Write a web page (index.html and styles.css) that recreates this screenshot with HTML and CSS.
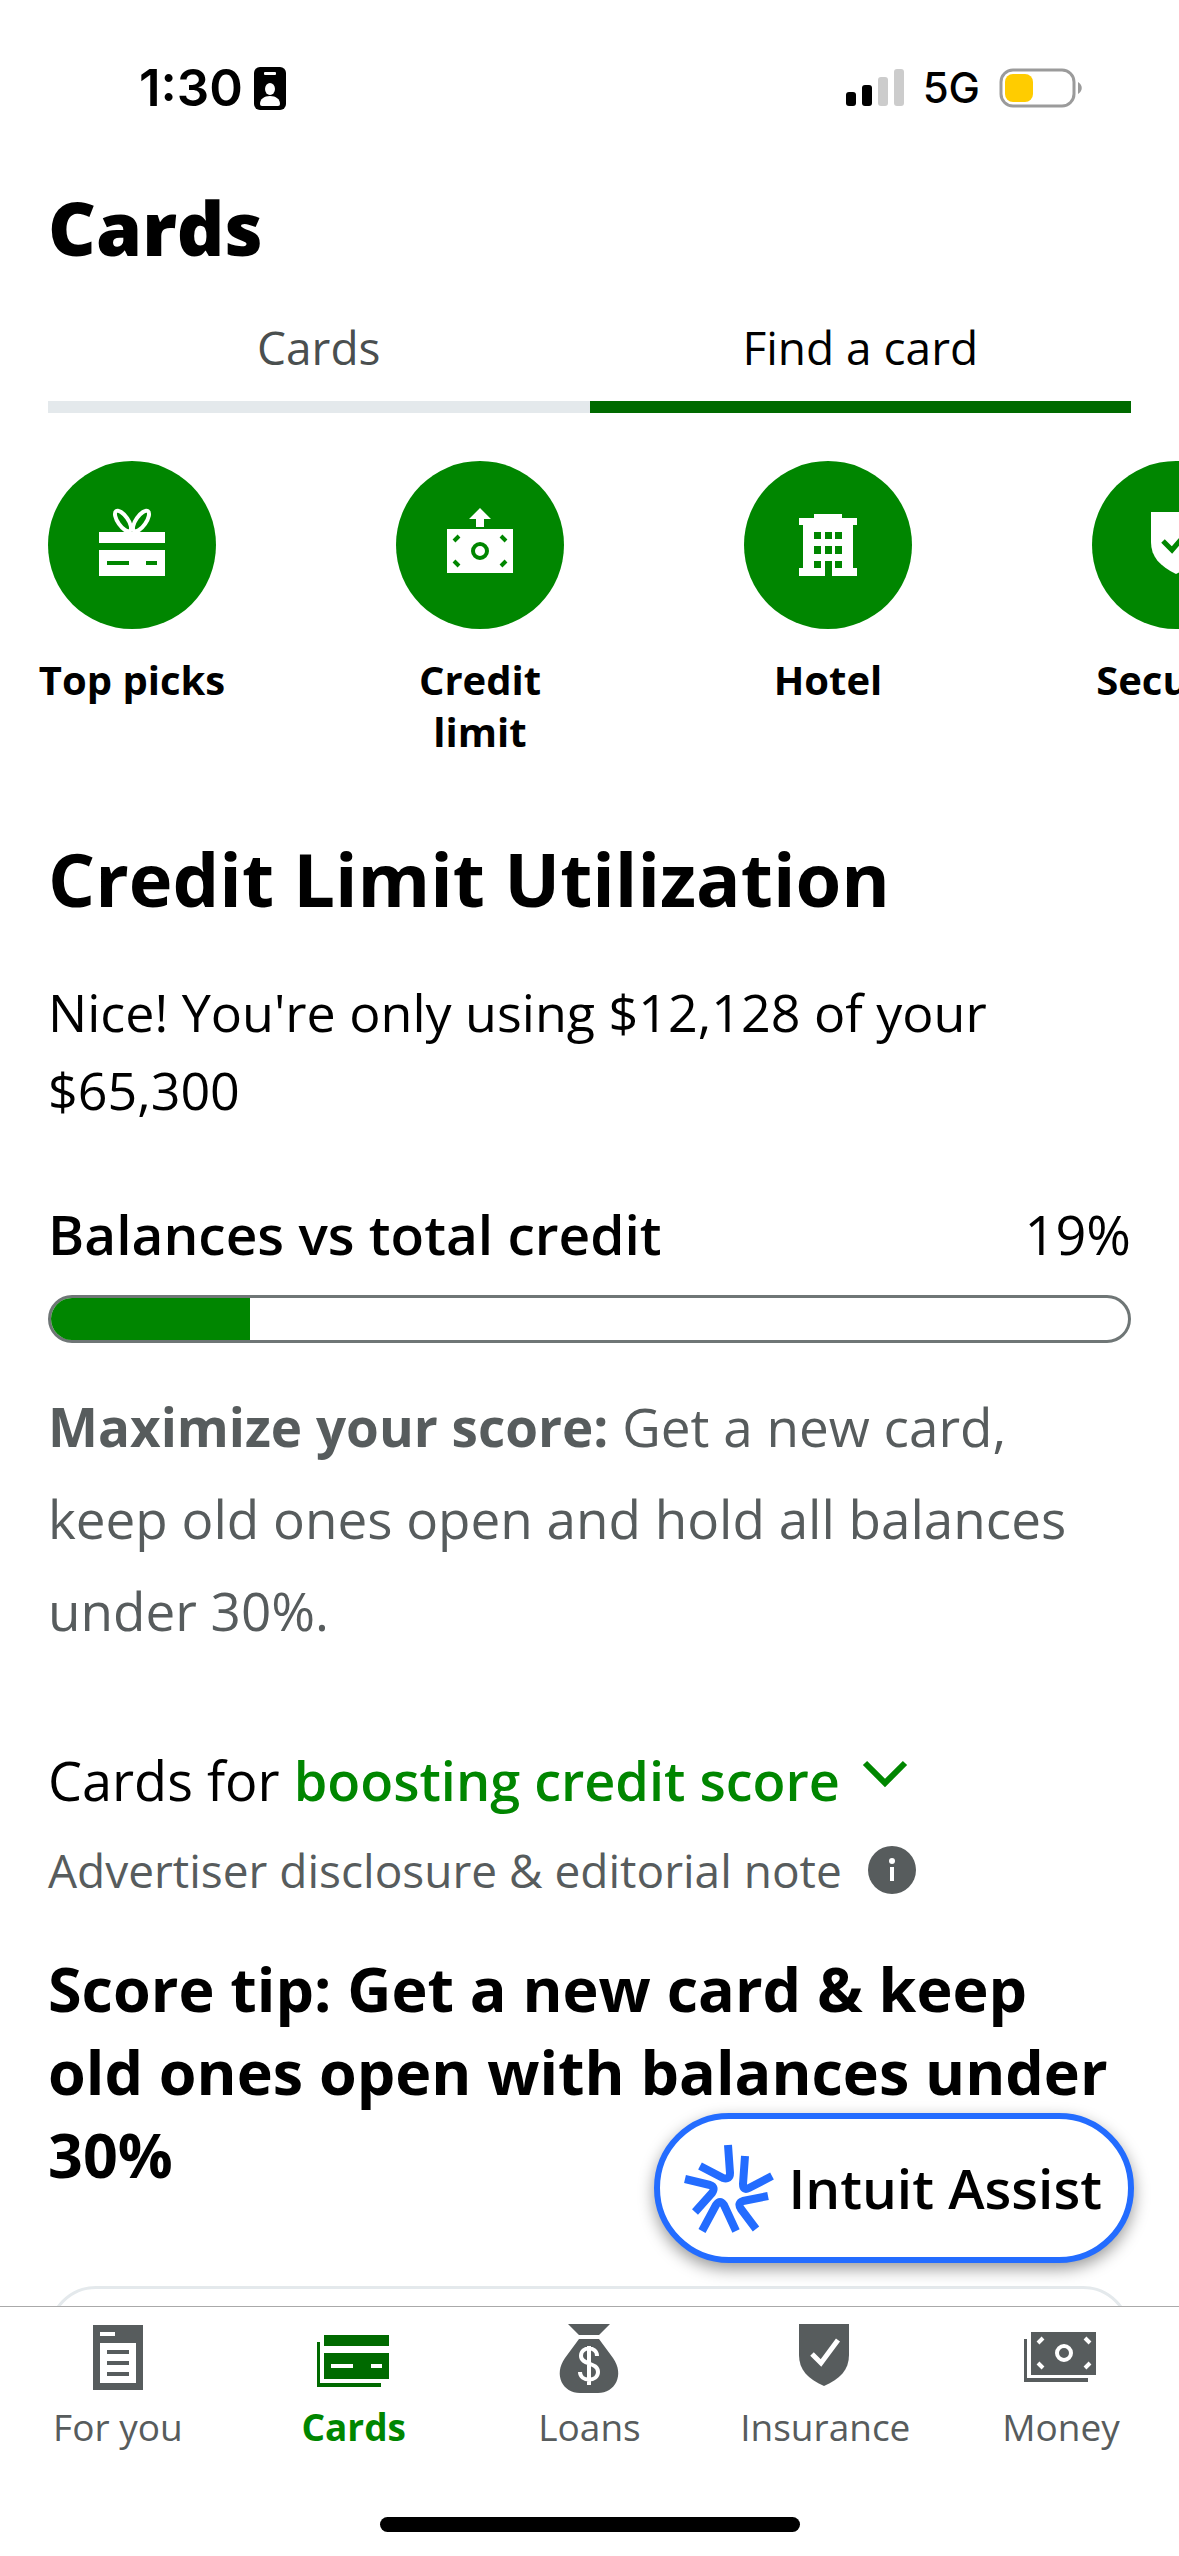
FILE: index.html
```html
<!DOCTYPE html>
<html lang="en">
<head>
<meta charset="utf-8">
<meta name="viewport" content="width=device-width, initial-scale=1">
<title>Cards</title>
<link rel="stylesheet" href="styles.css">
</head>
<body>
<div class="app">
  <header class="status">
    <div class="status-left">
      <span class="time">1:30</span>
      <svg class="badge" width="32" height="43" viewBox="0 0 32 43" aria-hidden="true">
        <rect width="32" height="43" rx="6" fill="#000"/>
        <rect x="10" y="5" width="12" height="3" rx="1" fill="#fff"/>
        <ellipse cx="16" cy="22" rx="5" ry="6" fill="#fff"/>
        <path d="M6 37c0-5 4-8 10-8s10 3 10 8q0 2-2 2H8q-2 0-2-2z" fill="#fff"/>
      </svg>
    </div>
    <div class="status-right">
      <svg width="58" height="38" viewBox="0 0 58 38" aria-hidden="true">
        <rect x="0" y="23" width="10" height="14" rx="3"/>
        <rect x="16" y="16" width="10" height="21" rx="3"/>
        <rect x="32" y="8" width="10" height="29" rx="3" fill="#ccc"/>
        <rect x="48" y="0" width="10" height="37" rx="3" fill="#ccc"/>
      </svg>
      <span class="network">5G</span>
      <svg width="84" height="40" viewBox="0 0 84 40" aria-hidden="true">
        <rect x="2" y="2" width="73" height="36" rx="12" fill="none" stroke="#9b9b9b" stroke-width="3"/>
        <rect x="6" y="6" width="28" height="28" rx="8" fill="#fc0"/>
        <path d="M79 14c5 3 5 9 0 12z" fill="#9b9b9b"/>
      </svg>
    </div>
  </header>

  <main class="content">
    <h1 class="title">Cards</h1>
    <div class="tabs" role="tablist">
      <button class="tab" role="tab" aria-selected="false">Cards</button>
      <button class="tab tab-active" role="tab" aria-selected="true">Find a card</button>
    </div>

    <nav class="categories" aria-label="Card categories">
      <a class="category" href="#top-picks">
        <span class="disc">
          <svg width="66" height="74" viewBox="0 0 66 74" aria-hidden="true">
            <g fill="none" stroke="#fff" stroke-width="4">
              <ellipse cx="24" cy="13" rx="5" ry="12" transform="rotate(-35 24 13)"/>
              <ellipse cx="42" cy="13" rx="5" ry="12" transform="rotate(35 42 13)"/>
            </g>
            <path fill="#fff" fill-rule="evenodd" d="M0 24h66v11H0zM0 42h66v26H0zM8 53v4h22v-4zM47 53v4h11v-4z"/>
          </svg>
        </span>
        <span class="category-name">Top picks</span>
      </a>
      <a class="category" href="#credit-limit">
        <span class="disc">
          <svg width="66" height="74" viewBox="0 0 66 74" aria-hidden="true">
            <path fill="#fff" d="M33 0l11 11h-7v8h-8v-8h-7zM0 21h66v44H0z"/>
            <g fill="none" stroke="#008600" stroke-width="4">
              <circle cx="33" cy="43" r="7"/>
              <path d="M7 33l5-5M54 28l5 5M7 53l5 5M59 53l-5 5"/>
            </g>
          </svg>
        </span>
        <span class="category-name">Credit limit</span>
      </a>
      <a class="category" href="#hotel">
        <span class="disc">
          <svg width="58" height="62" viewBox="0 0 58 62" aria-hidden="true">
            <path fill="#fff" fill-rule="evenodd" d="M0 4h15V0h28v4h15v7h-4v43h4v8H33V47h-7v15H0v-8h4V11H0zM15 18v7h7v-7zM26 18v7h7v-7zM36 18v7h7v-7zM15 32v8h7v-8zM26 32v8h7v-8zM36 32v8h7v-8zM15 47v7h7v-7zM36 47v7h7v-7z"/>
          </svg>
        </span>
        <span class="category-name">Hotel</span>
      </a>
      <a class="category" href="#secured">
        <span class="disc">
          <svg width="50" height="66" viewBox="0 0 50 66" aria-hidden="true">
            <path fill="#fff" d="M0 0h50v30c0 15-9 24-25 32C9 54 0 45 0 30z"/>
            <path fill="none" stroke="#008600" stroke-width="5" d="M12 29l9 9 18-21"/>
          </svg>
        </span>
        <span class="category-name">Secured</span>
      </a>
    </nav>

    <section class="utilization">
      <h2 class="heading">Credit Limit Utilization</h2>
      <p class="summary">Nice! You're only using $12,128 of your $65,300</p>
      <div class="balance">
        <span class="balance-name" id="balance-name">Balances vs total credit</span>
        <span>19%</span>
      </div>
      <div class="meter" role="meter" aria-labelledby="balance-name" aria-valuemin="0" aria-valuemax="100" aria-valuenow="19"><div class="meter-fill" style="width: 18.5%"></div></div>
      <p class="advice"><strong>Maximize your score:</strong> Get a new card, keep old ones open and hold all balances under 30%.</p>
    </section>

    <section class="offers">
      <p class="filter">Cards for
        <button class="filter-button">boosting credit score
          <svg class="chevron" width="46" height="28" viewBox="0 0 46 28" aria-hidden="true"><path d="M3 3l20 20L43 3" fill="none" stroke="#008600" stroke-width="6"/></svg>
        </button>
      </p>
      <a class="disclosure" href="#disclosure">Advertiser disclosure &amp; editorial note
        <svg width="48" height="48" viewBox="0 0 48 48" aria-hidden="true">
          <circle cx="24" cy="24" r="24" fill="#575c5d"/>
          <circle cx="24" cy="15" r="3" fill="#fff"/>
          <path d="M22 21h4v14h-4z" fill="#fff"/>
        </svg>
      </a>
      <h3 class="tip">Score tip: Get a new card &amp; keep old ones open with balances under 30%</h3>
      <div class="offer"></div>
    </section>
  </main>

  <footer class="bottom">
    <button class="assist">
      <svg width="90" height="90" viewBox="0 0 90 90" aria-hidden="true">
        <g fill="none" stroke="#236cff" stroke-width="8" stroke-linejoin="round">
          <path d="M44 2l2 28q0 7-7 5L16 23"/>
          <path d="M61 13l-2 28q0 7 6 4l23-12"/>
          <path d="M1 36l25 6q6 2 2 8L11 69"/>
          <path d="M18 88l14-26q4-6 8 0l12 26"/>
          <path d="M84 53l-25 5q-6 2-2 8l15 20"/>
        </g>
      </svg>
      Intuit Assist
    </button>
    <nav class="nav" aria-label="Main">
      <a class="nav-item" href="#for-you">
        <svg width="76" height="76" viewBox="0 0 76 76" aria-hidden="true">
          <path fill="#575c5d" fill-rule="evenodd" d="M13 5h50v65H13zM20 12v4h15v-4zM20 23v40h36V23zM27 30h22v4H27zM27 41h22v4H27zM27 52h22v4H27z"/>
        </svg>
        For you
      </a>
      <a class="nav-item nav-active" href="#cards" aria-current="page">
        <svg width="76" height="76" viewBox="0 0 76 76" aria-hidden="true">
          <path fill="#006a00" fill-rule="evenodd" d="M8 15h65v11H8zM8 33h65v26H8zM15 44v4h22v-4zM55 44v4h11v-4zM1 22h3v41h61v4H1z"/>
        </svg>
        Cards
      </a>
      <a class="nav-item" href="#loans">
        <svg width="76" height="76" viewBox="0 0 76 76" aria-hidden="true">
          <path fill="#575c5d" d="M17 4h42L48 15H28zM28 19h20l14 19c12 17 2 35-15 35H29C12 73 2 55 14 38z"/>
          <path fill="none" stroke="#fff" stroke-width="4" d="M46 36c0-10-16-10-16 0 0 9 17 6 17 16s-18 10-18 0M38 26v39"/>
        </svg>
        Loans
      </a>
      <a class="nav-item" href="#insurance">
        <svg width="76" height="76" viewBox="0 0 76 76" aria-hidden="true">
          <path fill="#575c5d" d="M12 4h50v31c0 15-9 24-25 31-16-7-25-16-25-31z"/>
          <path fill="none" stroke="#fff" stroke-width="5" d="M25 34l9 9 17-23"/>
        </svg>
        Insurance
      </a>
      <a class="nav-item" href="#money">
        <svg width="76" height="76" viewBox="0 0 76 76" aria-hidden="true">
          <path fill="#575c5d" d="M8 12h65v43H8zM1 19h3v39h61v4H1z"/>
          <g fill="none" stroke="#fff" stroke-width="4">
            <circle cx="41" cy="33" r="7"/>
            <path d="M15 23l5-5M62 18l5 5M15 43l5 5M67 43l-5 5"/>
          </g>
        </svg>
        Money
      </a>
    </nav>
    <div class="home"></div>
  </footer>
</div>
</body>
</html>
```
FILE: styles.css
```css
* {
  box-sizing: border-box;
  margin: 0;
}

body {
  background: #fff;
  color: #000;
  font-family: "Open Sans", "Noto Sans", sans-serif;
  font-size: 54px;
  line-height: 78px;
}

button {
  padding: 0;
  border: 0;
  background: none;
  color: inherit;
  font: inherit;
}

a {
  color: inherit;
  text-decoration: none;
}

svg {
  flex: none;
}

.app {
  display: flex;
  flex-direction: column;
  height: 100vh;
}

.status {
  display: flex;
  flex: none;
  justify-content: space-between;
  padding: 56px 96px 0 139px;
  font-family: Inter, sans-serif;
  line-height: 64px;
}

.status-left,
.status-right {
  display: flex;
  align-items: center;
}

.status-left {
  gap: 11px;
}

.status-right {
  gap: 19px;
}

.time {
  font-size: 51px;
  font-weight: 600;
}

.network {
  font-size: 42px;
  font-weight: 500;
}

.content {
  flex: 1;
  min-height: 0;
  padding: 62px 48px 0;
  overflow: hidden auto;
  scrollbar-width: none;
}

.title,
.heading {
  font-size: 74px;
  font-weight: 800;
  line-height: 92px;
}

.tabs {
  display: flex;
  margin-top: 34px;
}

.tab {
  flex: 1;
  height: 105px;
  padding-bottom: 16px;
  border-bottom: 12px solid #e4e9ec;
  color: #4a4f4f;
  font-size: 46px;
  line-height: 64px;
}

.tab-active {
  border-color: #006a00;
  color: #000;
}

.categories {
  display: flex;
  gap: 156px;
  margin: 48px -48px 0;
  padding-left: 36px;
  overflow: hidden;
}

.category {
  display: flex;
  flex: none;
  flex-direction: column;
  align-items: center;
  gap: 25px;
  width: 192px;
  font-size: 40px;
  font-weight: 700;
  line-height: 52px;
  text-align: center;
}

.disc {
  display: flex;
  align-items: center;
  justify-content: center;
  width: 168px;
  height: 168px;
  border-radius: 50%;
  background: #008600;
}

.heading {
  margin-top: 75px;
  font-weight: 700;
}

.summary {
  margin-top: 48px;
  font-size: 52px;
}

.balance {
  display: flex;
  justify-content: space-between;
  margin-top: 66px;
}

.balance-name {
  font-size: 55px;
  font-weight: 600;
}

.meter {
  height: 48px;
  margin-top: 22px;
  overflow: hidden;
  border: 3px solid #6f7676;
  border-radius: 24px;
}

.meter-fill {
  height: 100%;
  background: #008600;
}

.advice {
  margin-top: 38px;
  color: #575c5d;
  font-size: 53px;
  line-height: 92px;
}

.filter {
  margin-top: 84px;
}

.filter-button {
  display: inline-flex;
  align-items: center;
  gap: 22px;
  color: #008600;
  font-weight: 600;
}

.chevron {
  margin-bottom: 12px;
}

.disclosure {
  display: flex;
  align-items: center;
  gap: 26px;
  margin-top: 12px;
  color: #575c5d;
  font-size: 46px;
}

.tip {
  margin-top: 38px;
  font-size: 61px;
  font-weight: 700;
  line-height: 83px;
}

.offer {
  height: 600px;
  margin-top: 90px;
  border: 3px solid #e4e9ec;
  border-radius: 48px;
}

.bottom {
  position: relative;
  flex: none;
  border-top: 1px solid #aaa;
  background: #fff;
}

.assist {
  position: absolute;
  right: 45px;
  bottom: 100%;
  display: flex;
  align-items: center;
  gap: 14px;
  height: 150px;
  margin-bottom: 44px;
  padding: 0 26px 0 24px;
  border: 6px solid #236cff;
  border-radius: 75px;
  background: #fff;
  box-shadow: 0 6px 16px rgb(0 0 0 / 40%);
  font-size: 55px;
  font-weight: 600;
}

.nav {
  display: grid;
  grid-template-columns: repeat(5, 1fr);
  padding-top: 13px;
}

.nav-item {
  display: flex;
  flex-direction: column;
  align-items: center;
  gap: 6px;
  color: #575c5d;
  font-size: 37px;
  line-height: 50px;
}

.nav-active {
  color: #008600;
  font-weight: 700;
}

.home {
  width: 420px;
  height: 15px;
  margin: 65px auto 24px;
  border-radius: 8px;
  background: #000;
}
```
